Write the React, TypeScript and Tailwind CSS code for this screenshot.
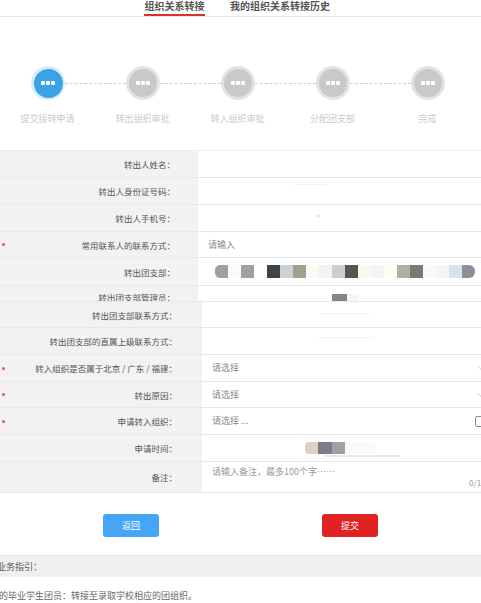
import React from "react";

const steps = ["提交接转申请", "转出组织审批", "转入组织审批", "分配团支部", "完成"];

const branchBlocks = [
  "#9aa0a8", "#fafcfc", "#a0a0a0", "#ffffff", "#3d4448", "#cdd0d5", "#a59e92", "#fbfaf5", "#f3f2f4", "#cbced2",
  "#5b5550", "#f9f9f0", "#f5f5f2", "#fdfdf3", "#b6aea5", "#777878", "#f5fafc", "#f2f6fa", "#dce2ea", "#8a9098",
];

function Dots() {
  return (
    <div className="flex gap-[1.5px]">
      <span className="h-[3.5px] w-[3.5px] rounded-[1px] bg-white" />
      <span className="h-[3.5px] w-[3.5px] rounded-[1px] bg-white" />
      <span className="h-[3.5px] w-[3.5px] rounded-[1px] bg-white" />
    </div>
  );
}

function Req() {
  return <span className="ml-[2px] h-[3px] w-[3px] rounded-full bg-[#e25a5a]" />;
}

function Chevron() {
  return (
    <svg width="8" height="6" viewBox="0 0 8 6" className="mr-[-4px] shrink-0">
      <path d="M0.5 1 L4 4.5 L7.5 1" fill="none" stroke="#b5b5b5" strokeWidth="0.8" />
    </svg>
  );
}

type RowProps = {
  label: string;
  h: string;
  wide?: boolean;
  req?: boolean;
  children?: React.ReactNode;
  labelClass?: string;
};

function Row({ label, h, wide, req, children, labelClass }: RowProps) {
  return (
    <div className={`flex border-b border-[#e8e8e8] ${h} overflow-hidden`}>
      <div
        className={`flex shrink-0 bg-[#f2f2f2] ${wide ? "w-[202px] pr-[25px]" : "w-[198px] pr-[23px]"} ${labelClass ?? "items-center"}`}
      >
        {req ? <Req /> : null}
        <span className="ml-auto whitespace-nowrap text-[8.5px] leading-[10px] text-[#555]">{label}</span>
      </div>
      <div className="flex min-w-0 flex-1 items-center overflow-hidden bg-white">{children}</div>
    </div>
  );
}

export default function App() {
  return (
    <div className="h-[603px] w-[481px] overflow-hidden bg-white font-['Noto_Sans_CJK_SC','Noto_Sans',sans-serif]">
      {/* Tabs */}
      <div className="flex h-[17px] border-b border-[#e6e6e6] pl-[144px]">
        <div className="flex h-[16px] w-[61px] justify-center border-b-2 border-[#d9312b] text-[10px] font-bold leading-[12px] text-[#555]">
          组织关系转接
        </div>
        <div className="ml-[25px] flex h-[16px] justify-center text-[10px] font-bold leading-[12px] text-[#555]">
          我的组织关系转接历史
        </div>
      </div>

      {/* Steps */}
      <div className="h-[133px] pt-[49px]">
        <div className="flex items-center pl-[31px]">
          {steps.map((s, i) => (
            <React.Fragment key={s}>
              {i === 0 ? (
                <div className="flex h-[34px] w-[34px] items-center justify-center rounded-full bg-[#d7ecfa]">
                  <div className="flex h-[29px] w-[29px] items-center justify-center rounded-full bg-[#3ba3e3]">
                    <Dots />
                  </div>
                </div>
              ) : (
                <div className="flex h-[34px] w-[34px] items-center justify-center rounded-full bg-[#e3e3e3]">
                  <div className="flex h-[28px] w-[28px] items-center justify-center rounded-full bg-[#c9c9c9]">
                    <Dots />
                  </div>
                </div>
              )}
              {i < steps.length - 1 ? (
                <div className="h-0 w-[61px] border-t border-dashed border-[#cfcfcf]" />
              ) : null}
            </React.Fragment>
          ))}
        </div>
        <div className="mt-[14px] grid w-[475px] grid-cols-5">
          {steps.map((s) => (
            <div key={s} className="text-center text-[9px] leading-[10px] text-[#cacaca]">
              {s}
            </div>
          ))}
        </div>
      </div>

      {/* Form */}
      <div className="border-t border-[#ececec]">
        <Row label="转出人姓名：" h="h-[27px]" />
        <Row label="转出人身份证号码：" h="h-[27px]">
          <div className="ml-[95px] mt-[-13px] h-[1px] w-[34px] bg-[#f3f3f3]" />
        </Row>
        <Row label="转出人手机号：" h="h-[27px]">
          <div className="ml-[120px] mt-[-4px] h-[2px] w-[1px] bg-[#bbb]" />
        </Row>
        <Row label="常用联系人的联系方式：" h="h-[26px]" req>
          <span className="pl-[10px] text-[9px] text-[#8a8a8a]">请输入</span>
        </Row>
        <Row label="转出团支部：" h="h-[28px]">
          <div className="ml-[17px] flex">
            {branchBlocks.map((c, i) => (
              <span
                key={i}
                className={`h-[13px] w-[13px] ${i === 0 ? "rounded-l-[5px]" : ""} ${i === branchBlocks.length - 1 ? "rounded-r-[6px]" : ""}`}
                style={{ backgroundColor: c }}
              />
            ))}
          </div>
        </Row>
        <Row label="转出团支部管理员：" h="h-[16px]" labelClass="items-start pt-[6px]">
          <div className="ml-[134px] flex self-start pt-[8px]">
            <span className="h-[10px] w-[15px] bg-[#7f868c]" />
            <span className="h-[10px] w-[12px] bg-[#f7f6f0]" />
          </div>
        </Row>
        <Row label="转出团支部联系方式：" h="h-[26px]" wide>
          <div className="ml-[118px] mt-[-2px] h-[1px] w-[50px] bg-[#f1f1f1]" />
        </Row>
        <Row label="转出团支部的直属上级联系方式：" h="h-[27px]" wide>
          <div className="ml-[115px] mt-[-8px] h-[1px] w-[56px] bg-[#f1f1f1]" />
        </Row>
        <Row label="转入组织是否属于北京 / 广东 / 福建：" h="h-[27px]" wide req>
          <span className="pl-[10px] text-[9px] text-[#8a8a8a]">请选择</span>
          <span className="ml-auto" />
          <Chevron />
        </Row>
        <Row label="转出原因：" h="h-[26px]" wide req>
          <span className="pl-[10px] text-[9px] text-[#8a8a8a]">请选择</span>
          <span className="ml-auto" />
          <Chevron />
        </Row>
        <Row label="申请转入组织：" h="h-[27px]" wide req>
          <span className="pl-[10px] text-[9px] text-[#8a8a8a]">请选择 ...</span>
          <span className="ml-auto" />
          <span className="mr-[-5px] h-[11px] w-[11px] shrink-0 rounded-[2px] border border-[#8c8c8c]" />
        </Row>
        <Row label="申请时间：" h="h-[27px]" wide>
          <div className="ml-[103px] flex flex-col pt-[3px]">
            <div className="flex">
              <span className="h-[12px] w-[13px] rounded-l-[4px] bg-[#ddd0c5]" />
              <span className="h-[12px] w-[14px] bg-[#7a7d8c]" />
              <span className="h-[12px] w-[13px] bg-[#9ba49c]" />
              <span className="h-[12px] w-[30px] bg-[#fbfbf6]" />
            </div>
            <div className="ml-[20px] mt-[1px] h-[1.5px] w-[75px] bg-[#e9e9e9]" />
          </div>
        </Row>
        <div className="flex h-[31px] border-b border-[#e8e8e8]">
          <div className="flex w-[202px] shrink-0 items-center bg-[#f2f2f2] pr-[25px]">
            <span className="ml-auto text-[8.5px] leading-[10px] text-[#555]">备注：</span>
          </div>
          <div className="flex flex-1 flex-col overflow-hidden bg-white">
            <span className="pl-[10px] pt-[4px] text-[9px] leading-[12px] text-[#9a9a9a]">请输入备注，最多100个字……</span>
            <span className="mr-[-9px] mt-auto self-end pb-[4px] text-[8px] leading-[10px] text-[#999]">0/100</span>
          </div>
        </div>
      </div>

      {/* Buttons */}
      <div className="flex h-[63px] border-b border-[#e3e3e3] pl-[103px] pt-[21px]">
        <button className="flex h-[23px] w-[56px] items-center justify-center rounded-[3px] bg-[#45a6f7] text-[9px] text-white">
          返回
        </button>
        <button className="ml-[163px] flex h-[23px] w-[56px] items-center justify-center rounded-[3px] bg-[#e12222] text-[9px] text-white">
          提交
        </button>
      </div>

      {/* Guide */}
      <div className="flex h-[21px] items-center bg-[#efefef]">
        <span className="ml-[-3px] text-[9px] text-[#555]">业务指引：</span>
      </div>
      <div className="pt-[13px]">
        <div className="ml-[-1px] text-[9px] leading-[12px] text-[#666]">的毕业学生团员：转接至录取学校相应的团组织。</div>
      </div>
    </div>
  );
}
